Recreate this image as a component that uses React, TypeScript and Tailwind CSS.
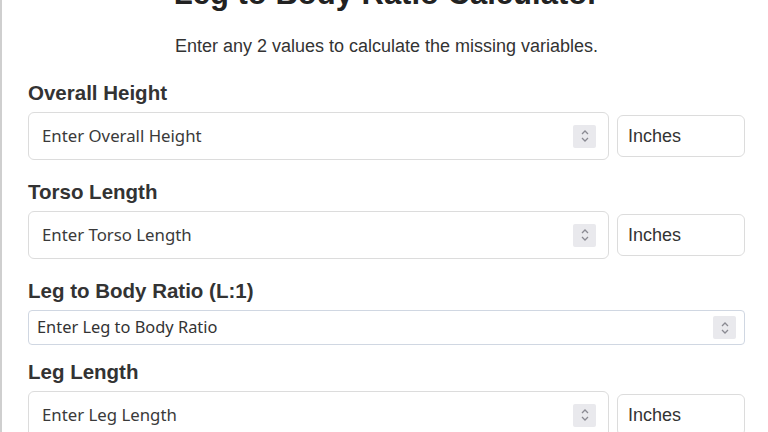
const Spinner = () => (
  <div className="flex h-[23px] w-[23px] flex-col items-center justify-center rounded-[2px] bg-[#e9e9ed]">
    <svg width="10" height="16" viewBox="0 0 10 16" fill="none">
      <path d="M2 6 L5 3 L8 6" stroke="#8a8a92" strokeWidth="1.3" />
      <path d="M2 10 L5 13 L8 10" stroke="#8a8a92" strokeWidth="1.3" />
    </svg>
  </div>
);

const Label = ({ children }: { children: string }) => (
  <div className="mb-[7px] text-[20.5px] font-bold leading-[24px] text-[#333]">
    {children}
  </div>
);

const Field = ({
  label,
  placeholder,
  top,
}: {
  label: string;
  placeholder: string;
  top: string;
}) => (
  <div className={top}>
    <Label>{label}</Label>
    <div className="flex items-center gap-[8px]">
      <div className="flex h-[48px] flex-1 items-center justify-between rounded-[6px] border border-[#dcdcdc] pl-[13px] pr-[12px]">
        <span className="font-['Noto_Sans',sans-serif] text-[16.8px] text-[#3a3a3a]">
          {placeholder}
        </span>
        <Spinner />
      </div>
      <div className="flex h-[42px] w-[128px] items-center rounded-[6px] border border-[#dcdcdc] px-[10px] text-[18px] text-[#333]">
        Inches
      </div>
    </div>
  </div>
);

export default function App() {
  return (
    <div className="h-[432px] w-[768px] overflow-hidden bg-white font-['Liberation_Sans',Arial,sans-serif]">
      <div className="flex h-[460px] flex-col border-l-2 border-[#cfcfcf] pl-[26px] pr-[23px]">
        <h1 className="mt-[-24px] text-center text-[31px] font-bold leading-[36px] text-[#222]">
          Leg to Body Ratio Calculator
        </h1>
        <p className="mt-[23px] text-center text-[18px] leading-[22px] text-[#333]">
          Enter any 2 values to calculate the missing variables.
        </p>
        <Field label="Overall Height" placeholder="Enter Overall Height" top="mt-[24px]" />
        <Field label="Torso Length" placeholder="Enter Torso Length" top="mt-[20px]" />
        <div className="mt-[20px]">
          <Label>Leg to Body Ratio (L:1)</Label>
          <div className="flex h-[35px] items-center justify-between rounded-[4px] border border-[#d0d7e2] pl-[8px] pr-[8px]">
            <span className="font-['Noto_Sans',sans-serif] text-[16.4px] text-[#333]">
              Enter Leg to Body Ratio
            </span>
            <Spinner />
          </div>
        </div>
        <Field label="Leg Length" placeholder="Enter Leg Length" top="mt-[15px]" />
      </div>
    </div>
  );
}
